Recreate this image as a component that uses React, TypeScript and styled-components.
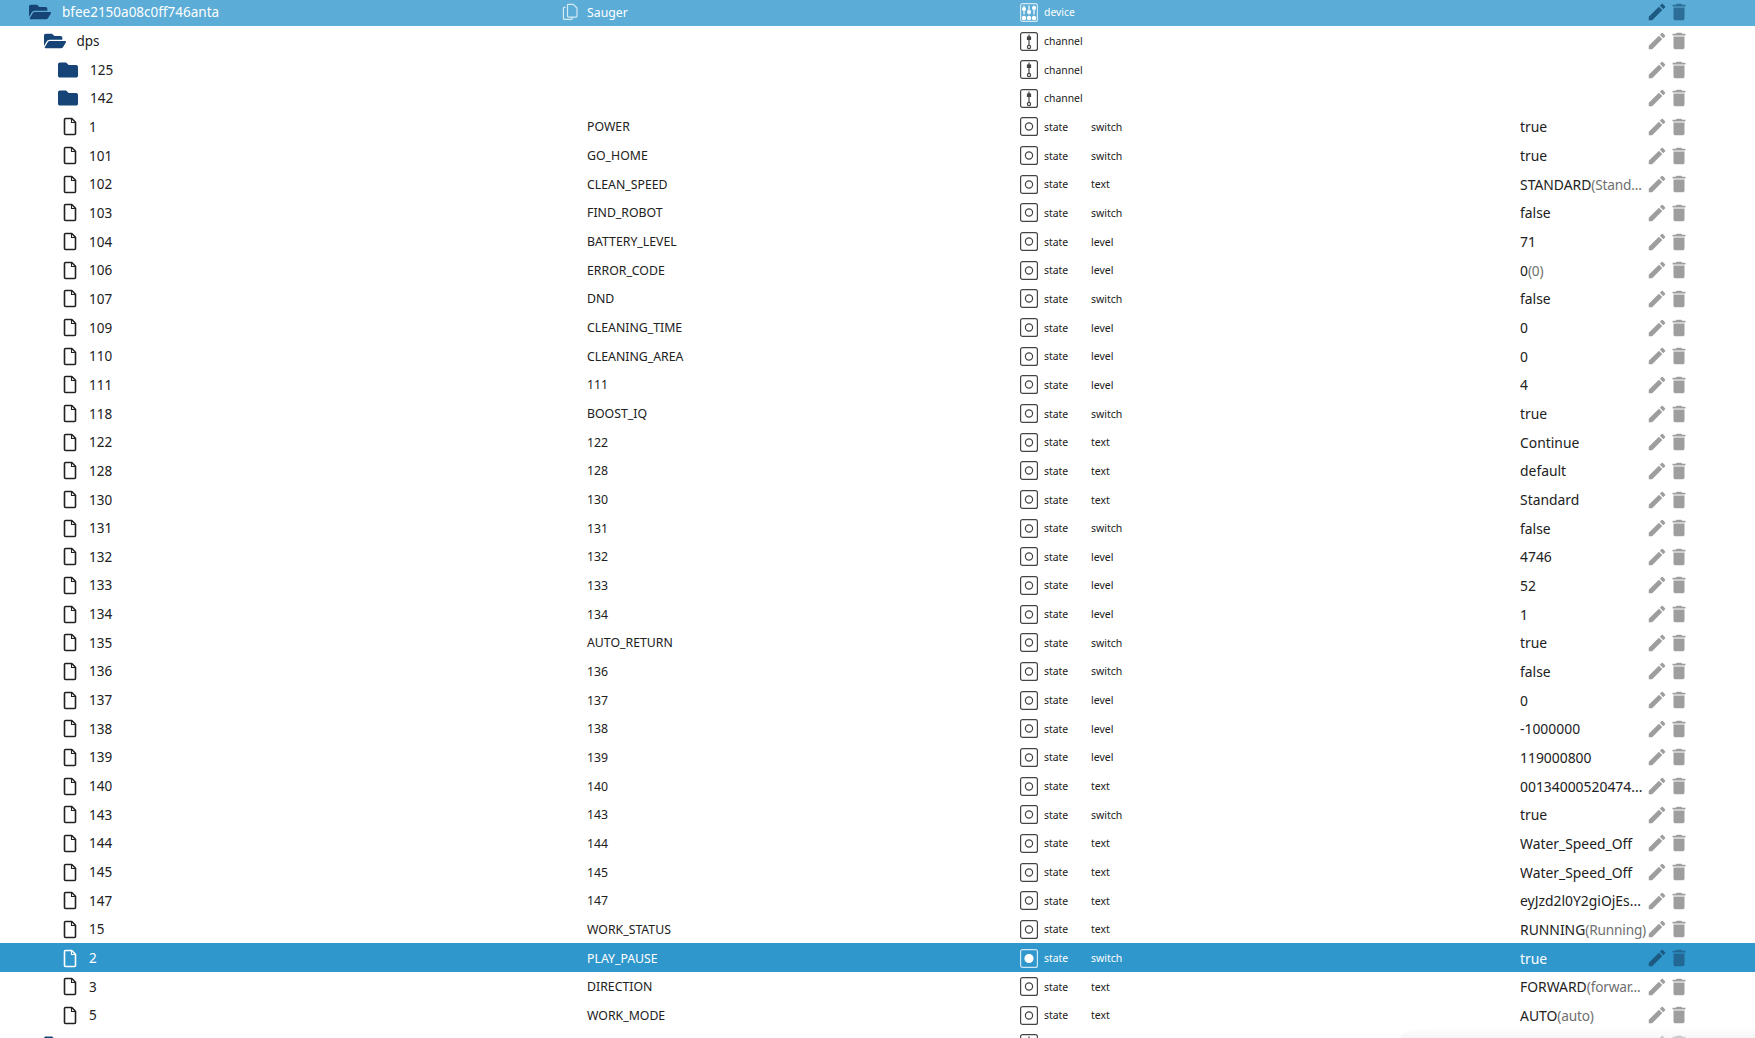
import React from 'react';
import styled, { createGlobalStyle } from 'styled-components';
import { FaFolder, FaFolderOpen } from 'react-icons/fa';
import { MdEdit, MdDelete } from 'react-icons/md';

type Kind = 'device' | 'channel' | 'state';

interface RowData {
  id: string;
  level: 0 | 1 | 2;
  icon: 'open' | 'closed' | 'file';
  name?: string;
  kind: Kind;
  role?: string;
  value?: string;
  hint?: string;
}

const st = (id: string, name: string, role: string, value: string, hint?: string): RowData => ({
  id,
  level: 2,
  icon: 'file',
  name,
  kind: 'state',
  role,
  value,
  hint,
});

const rows: RowData[] = [
  { id: 'bfee2150a08c0ff746anta', level: 0, icon: 'open', name: 'Sauger', kind: 'device' },
  { id: 'dps', level: 1, icon: 'open', kind: 'channel' },
  { id: '125', level: 2, icon: 'closed', kind: 'channel' },
  { id: '142', level: 2, icon: 'closed', kind: 'channel' },
  st('1', 'POWER', 'switch', 'true'),
  st('101', 'GO_HOME', 'switch', 'true'),
  st('102', 'CLEAN_SPEED', 'text', 'STANDARD', '(Stand...'),
  st('103', 'FIND_ROBOT', 'switch', 'false'),
  st('104', 'BATTERY_LEVEL', 'level', '71'),
  st('106', 'ERROR_CODE', 'level', '0', '(0)'),
  st('107', 'DND', 'switch', 'false'),
  st('109', 'CLEANING_TIME', 'level', '0'),
  st('110', 'CLEANING_AREA', 'level', '0'),
  st('111', '111', 'level', '4'),
  st('118', 'BOOST_IQ', 'switch', 'true'),
  st('122', '122', 'text', 'Continue'),
  st('128', '128', 'text', 'default'),
  st('130', '130', 'text', 'Standard'),
  st('131', '131', 'switch', 'false'),
  st('132', '132', 'level', '4746'),
  st('133', '133', 'level', '52'),
  st('134', '134', 'level', '1'),
  st('135', 'AUTO_RETURN', 'switch', 'true'),
  st('136', '136', 'switch', 'false'),
  st('137', '137', 'level', '0'),
  st('138', '138', 'level', '-1000000'),
  st('139', '139', 'level', '119000800'),
  st('140', '140', 'text', '00134000520474...'),
  st('143', '143', 'switch', 'true'),
  st('144', '144', 'text', 'Water_Speed_Off'),
  st('145', '145', 'text', 'Water_Speed_Off'),
  st('147', '147', 'text', 'eyJzd2l0Y2giOjEs...'),
  st('15', 'WORK_STATUS', 'text', 'RUNNING', '(Running)'),
  st('2', 'PLAY_PAUSE', 'switch', 'true'),
  st('3', 'DIRECTION', 'text', 'FORWARD', '(forwar...'),
  st('5', 'WORK_MODE', 'text', 'AUTO', '(auto)'),
  // next row, only its icons reach into the window
  { id: '', level: 1, icon: 'closed', kind: 'channel' },
];

const GlobalStyle = createGlobalStyle`
  html, body {
    margin: 0;
    height: 100%;
    overflow: hidden;
    background: #ffffff;
  }
  body {
    font-family: "Noto Sans", "Open Sans", sans-serif;
  }
`;

const Viewport = styled.div`
  position: relative;
  height: 1038px;
  overflow: hidden;
`;

// faint shade that lies over the bottom right corner of the list
const CornerShade = styled.div`
  position: absolute;
  right: 0;
  bottom: 0;
  width: 355px;
  height: 11px;
  border-top-left-radius: 40px 11px;
  background: linear-gradient(to bottom, rgba(240, 240, 240, 0), rgba(240, 240, 240, 0.6));
  pointer-events: none;
`;

const Tree = styled.div`
  display: grid;
  grid-auto-rows: 28.66px;
  margin-top: -2.66px;
`;

type Tone = 'plain' | 'device' | 'selected';

const Row = styled.div<{ $tone: Tone }>`
  display: grid;
  grid-template-columns: 562px 458px 71px 429px 128px 107px;
  align-items: center;
  padding-top: 1.4px;
  box-sizing: border-box;
  background: ${(p) =>
    p.$tone === 'device' ? '#5bacd6' : p.$tone === 'selected' ? '#3097cd' : 'transparent'};
  color: ${(p) => (p.$tone === 'plain' ? '#212121' : '#ffffff')};
`;

const NameCell = styled.div<{ $indent: number; $gap: number }>`
  display: flex;
  align-items: center;
  font-size: 13.5px;
  padding-left: ${(p) => p.$indent}px;
  gap: ${(p) => p.$gap}px;
`;

const FolderIcon = styled.span<{ $open: boolean }>`
  display: flex;
  color: #164477;
  font-size: ${(p) => (p.$open ? 22 : 20)}px;
  line-height: 0;
`;

const TitleCell = styled.div`
  display: flex;
  align-items: center;
  font-size: 12.3px;
`;

const TitleIconSlot = styled.span`
  display: flex;
  flex: 0 0 25px;
`;

const RoleCell = styled.div`
  display: flex;
  align-items: center;
  gap: 6px;
  font-size: 10.4px;
`;

const RoleText = styled.div`
  font-size: 10.5px;
`;

const ValueCell = styled.div`
  font-size: 13.9px;
  white-space: nowrap;
`;

const ValueHint = styled.span`
  color: #6f6f6f;
  font-size: 13.7px;
  letter-spacing: -0.2px;
`;

const Actions = styled.div<{ $tone: Tone }>`
  display: flex;
  align-items: center;
  font-size: 22px;
  margin-left: -2px;
  color: ${(p) => (p.$tone === 'plain' ? '#9e9e9e' : '#1d5a82')};
`;

const TrashIcon = styled(MdDelete)<{ $tone: Tone }>`
  opacity: ${(p) => (p.$tone === 'plain' ? 1 : 0.75)};
`;

const FileIcon = () => (
  <svg width="18" height="19" viewBox="0 0 18 19" fill="none" stroke="currentColor" strokeWidth="1.6" strokeLinejoin="round">
    <path d="M3.5 2.5c0-.6.4-1 1-1h6.3l3.7 3.7v11.3c0 .6-.4 1-1 1h-9c-.6 0-1-.4-1-1z" />
    <path d="M10.5 1.7v3.8h3.8" strokeWidth="1.1" />
  </svg>
);

const CopyIcon = () => (
  <svg width="17" height="18" viewBox="0 0 17 18" fill="none" stroke="#d6eaf5" strokeWidth="1.2">
    <path d="M5.5 2.2c0-.5.4-.8.8-.8h5l3.7 3.7v8.2c0 .4-.4.8-.8.8H6.3c-.4 0-.8-.4-.8-.8z" />
    <path d="M3.5 4.4H2.2c-.5 0-.8.4-.8.8v10.3c0 .5.4.9.8.9h7.3c.5 0 .8-.4.8-.8v-1" />
  </svg>
);

const TypeIcon = ({ kind, tone }: { kind: Kind; tone: Tone }) => {
  const line = tone === 'plain' ? '#444444' : '#ffffff';
  const frame = tone === 'plain' ? '#444444' : '#cfe6f3';
  return (
    <svg width="18" height="19" viewBox="0 0 18 19" fill="none" stroke={line} strokeWidth="1.2">
      <rect x="0.6" y="0.6" width="16.8" height="17.8" rx="2" stroke={frame} />
      {kind === 'state' &&
        (tone === 'selected' ? (
          <circle cx="9" cy="9.5" r="4" fill="#ffffff" />
        ) : (
          <circle cx="9" cy="9.5" r="3.6" />
        ))}
      {kind === 'channel' && (
        <>
          <path d="M9 2.5v11" />
          <rect x="7.5" y="5" width="3" height="2.4" fill={line} />
          <circle cx="9" cy="15" r="1.6" />
        </>
      )}
      {kind === 'device' && (
        <>
          <path d="M4 2.5v9M9 2.5v9M14 2.5v9" />
          <rect x="2.8" y="5" width="2.4" height="2" fill={line} />
          <rect x="7.8" y="8" width="2.4" height="2" fill={line} />
          <rect x="12.8" y="4" width="2.4" height="2" fill={line} />
          <circle cx="4" cy="15" r="1.6" fill={line} />
          <circle cx="9" cy="15" r="1.6" fill={line} />
          <circle cx="14" cy="15" r="1.6" fill={line} />
        </>
      )}
    </svg>
  );
};

const toneOf = (r: RowData): Tone =>
  r.kind === 'device' ? 'device' : r.id === '2' ? 'selected' : 'plain';

const indentOf = (r: RowData) => (r.icon === 'file' ? 61 : 29 + r.level * 14.5);
const gapOf = (r: RowData) => (r.icon === 'file' ? 10 : r.icon === 'closed' ? 12 : 11);

const App: React.FC = () => (
  <Viewport>
    <GlobalStyle />
    <Tree>
      {rows.map((r) => {
        const tone = toneOf(r);
        return (
          <Row key={r.id || 'next'} $tone={tone}>
            <NameCell $indent={indentOf(r)} $gap={gapOf(r)}>
              {r.icon === 'file' ? (
                <FileIcon />
              ) : (
                <FolderIcon $open={r.icon === 'open'}>
                  {r.icon === 'open' ? <FaFolderOpen /> : <FaFolder />}
                </FolderIcon>
              )}
              {r.id}
            </NameCell>
            <TitleCell>
              <TitleIconSlot>{r.kind === 'device' && <CopyIcon />}</TitleIconSlot>
              {r.name}
            </TitleCell>
            <RoleCell>
              <TypeIcon kind={r.kind} tone={tone} />
              {r.id && r.kind}
            </RoleCell>
            <RoleText>{r.role}</RoleText>
            <ValueCell>
              {r.value}
              {r.hint && <ValueHint>{r.hint}</ValueHint>}
            </ValueCell>
            <Actions $tone={tone}>
              <MdEdit />
              <TrashIcon $tone={tone} />
            </Actions>
          </Row>
        );
      })}
    </Tree>
    <CornerShade />
  </Viewport>
);

export default App;
